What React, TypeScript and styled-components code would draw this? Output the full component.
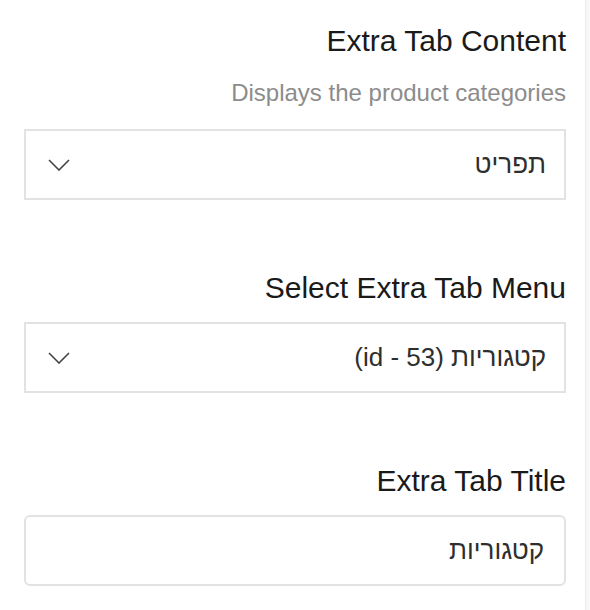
import React from 'react'
import styled, { createGlobalStyle } from 'styled-components'

const GlobalStyle = createGlobalStyle`
  html, body {
    margin: 0;
    padding: 0;
    background: #f8f8f8;
  }
  body {
    font-family: "Liberation Sans", Arial, sans-serif;
  }
`

function Chevron() {
    return (
        <svg width="22" height="12" viewBox="0 0 22 12" fill="none">
            <path d="M1 1L11 11L21 1" stroke="#444" strokeWidth="1.6" />
        </svg>
    )
}

function SelectField({ label, hint, value }: { label: string; hint?: string; value: React.ReactNode }) {
    return (
        <Field>
            <Label>{label}</Label>
            {hint && <Hint>{hint}</Hint>}
            <SelectBox>
                <Value>{value}</Value>
                <Arrow>
                    <Chevron />
                </Arrow>
            </SelectBox>
        </Field>
    )
}

export default function App() {
    return (
        <>
            <GlobalStyle />
            <Panel>
                <SelectField
                    label="Extra Tab Content"
                    hint="Displays the product categories"
                    value="תפריט"
                />
                <SelectField
                    label="Select Extra Tab Menu"
                    value={<>קטגוריות <bdi>(id - 53)</bdi></>}
                />
                <Field>
                    <Label>Extra Tab Title</Label>
                    <TextInput defaultValue="קטגוריות" dir="rtl" />
                </Field>
            </Panel>
        </>
    )
}

const Panel = styled.div`
  direction: rtl;
  width: 586px;
  min-height: 610px;
  box-sizing: border-box;
  background: #fff;
  border-right: 1px solid #ececec;
  padding: 23px 19px 0 24px;
  display: flex;
  flex-direction: column;
  gap: 70px;
`

const Field = styled.div`
  display: flex;
  flex-direction: column;
`

const Label = styled.div`
  direction: ltr;
  text-align: right;
  font-size: 30px;
  line-height: 36px;
  color: #1a1a1a;
  margin-bottom: 16px;
`

const Hint = styled.div`
  direction: ltr;
  text-align: right;
  font-size: 24px;
  line-height: 28px;
  color: #8c8c8c;
  margin: 4px 0 22px;
`

const SelectBox = styled.div`
  height: 71px;
  box-sizing: border-box;
  border: 2px solid #e2e2e2;
  display: flex;
  align-items: center;
  padding: 0 18px 0 22px;
  background: #fff;
`

const Value = styled.span`
  font-size: 26px;
  color: #2e2e2e;
`

const Arrow = styled.span`
  margin-right: auto;
  display: flex;
  align-items: center;
`

const TextInput = styled.input`
  height: 71px;
  box-sizing: border-box;
  border: 2px solid #e2e2e2;
  border-radius: 6px;
  padding: 0 20px;
  font-family: "Liberation Sans", Arial, sans-serif;
  font-size: 26px;
  color: #2e2e2e;
  background: #fff;
  outline: none;
`
